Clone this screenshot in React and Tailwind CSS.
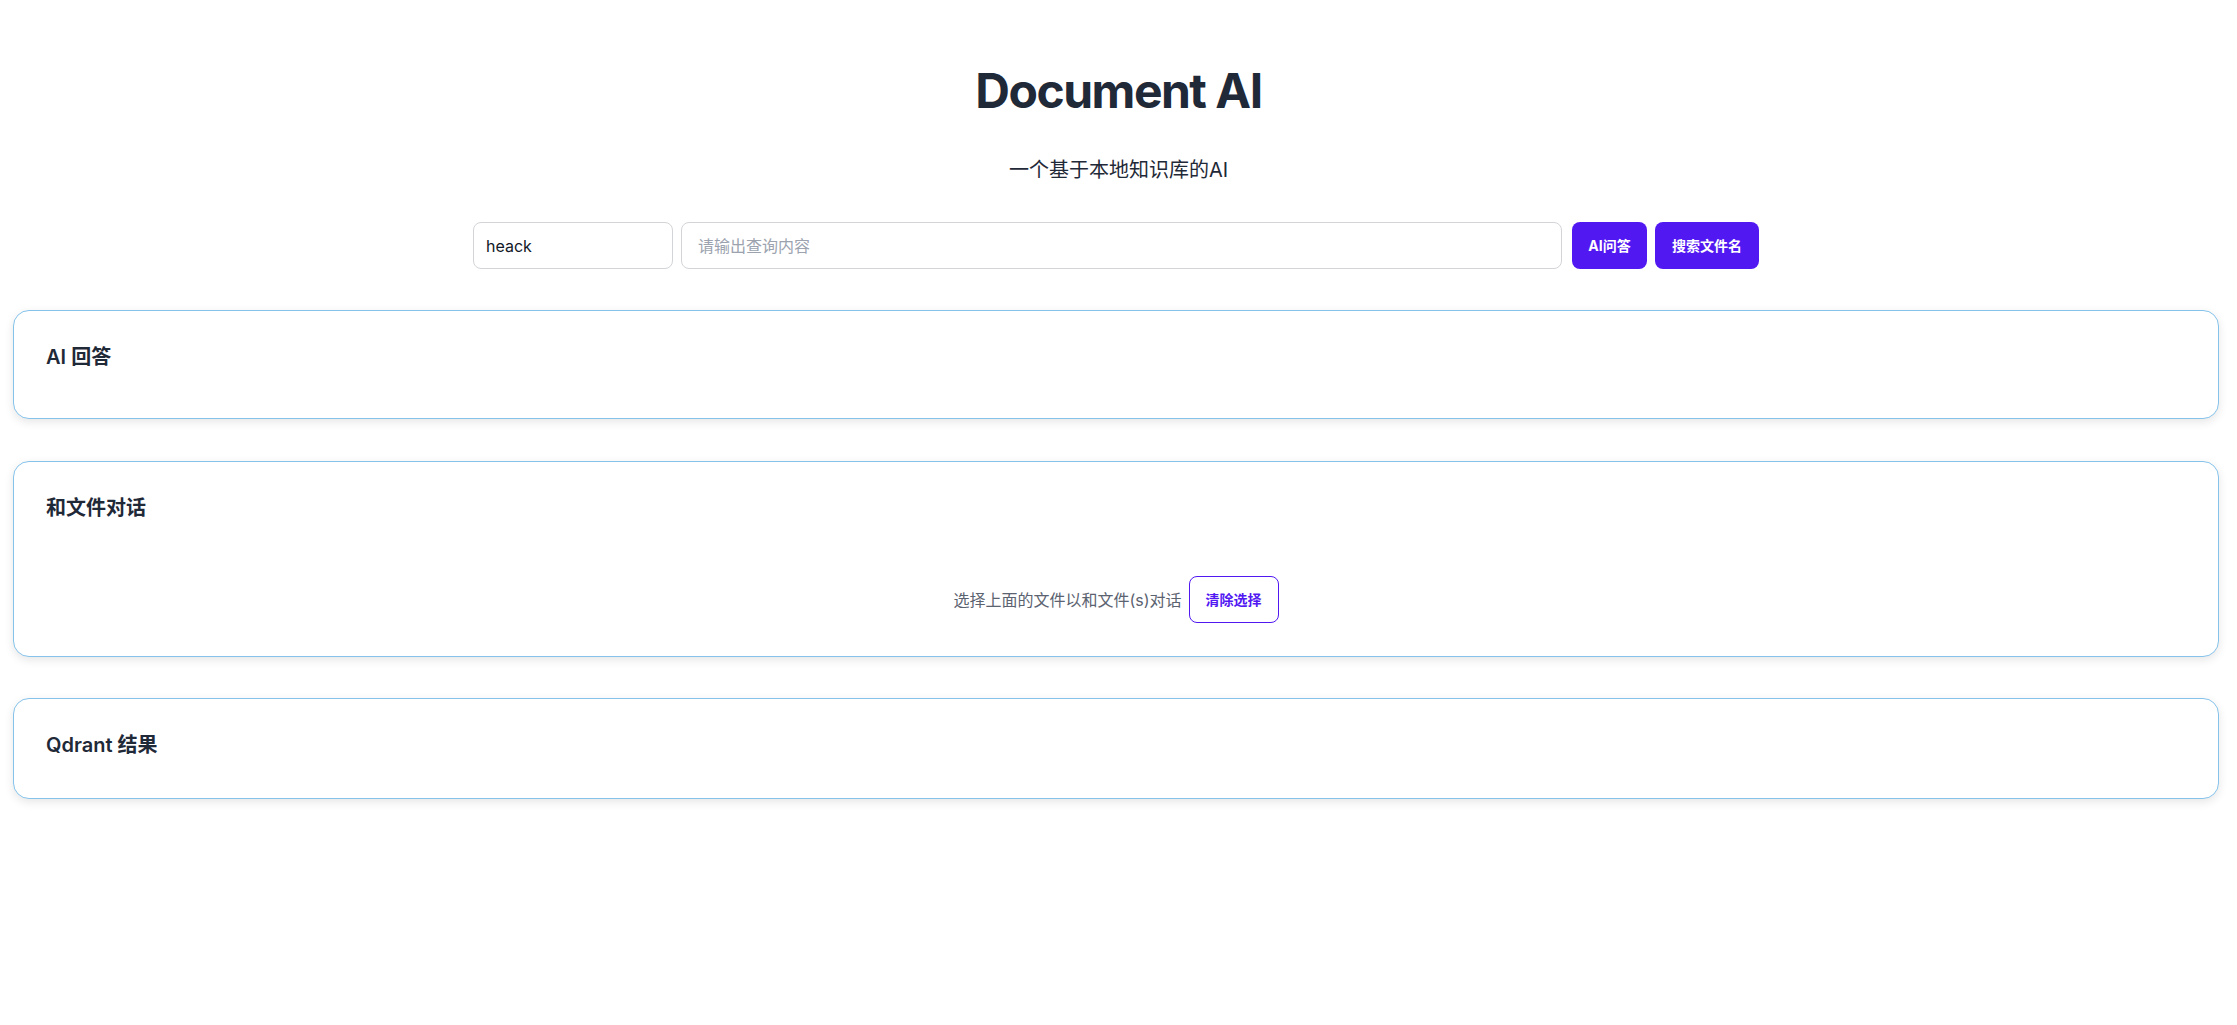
export default function App() {
  const cards = [
    { id: 'answer', title: 'AI 回答', h: 'h-[109px]', mt: 'mt-[41px]' },
    { id: 'chat', title: '和文件对话', mt: 'mt-[42px]', chat: true },
    { id: 'qdrant', title: 'Qdrant 结果', h: 'h-[101px]', mt: 'mt-[41px]' },
  ];

  return (
    <div className="min-h-screen bg-white text-[#1f2937] font-['Inter','Noto_Sans_CJK_SC',sans-serif]">
      {/* Header */}
      <h1 className="pt-[67px] text-center text-5xl font-bold leading-none tracking-[-1.5px]">Document AI</h1>
      <p className="mt-[41px] text-center text-xl leading-7">一个基于本地知识库的AI</p>

      {/* Search bar */}
      <div className="mt-[38px] flex justify-center pr-[5px]">
        <input
          defaultValue="heack"
          className="h-[47px] w-[200px] rounded-lg border border-[#d2d4d7] px-3 text-base text-[#111827] outline-none"
        />
        <input
          placeholder="请输出查询内容"
          className="ml-2 h-[47px] w-[881px] rounded-lg border border-[#d2d4d7] px-4 text-base outline-none placeholder:text-[#9ca3af]"
        />
        <button className="ml-[10px] h-[47px] w-[75px] rounded-lg bg-[#5218f2] text-sm font-bold text-white">
          AI问答
        </button>
        <button className="ml-2 h-[47px] w-[104px] rounded-lg bg-[#5218f2] text-sm font-bold text-white">
          搜索文件名
        </button>
      </div>

      {/* Result cards */}
      <div className="ml-[13px] mr-[18px] pb-10">
        {cards.map((card) => (
          <div
            key={card.id}
            className={`${card.mt} ${card.h || ''} rounded-2xl border border-[#86c3ea] bg-white px-8 pt-8 shadow-[0_3px_10px_rgba(0,0,0,0.1)] ${
              card.chat ? 'pb-[33px]' : ''
            }`}
          >
            <h2 className="text-xl font-semibold leading-7">{card.title}</h2>
            {card.chat && (
              <div className="mt-[54px] flex items-center justify-center gap-[7px]">
                <span className="text-base text-[#5b6270]">选择上面的文件以和文件(s)对话</span>
                <button className="h-[47px] w-[90px] rounded-lg border border-[#5218f2] text-sm font-bold text-[#5218f2]">
                  清除选择
                </button>
              </div>
            )}
          </div>
        ))}
      </div>
    </div>
  );
}
